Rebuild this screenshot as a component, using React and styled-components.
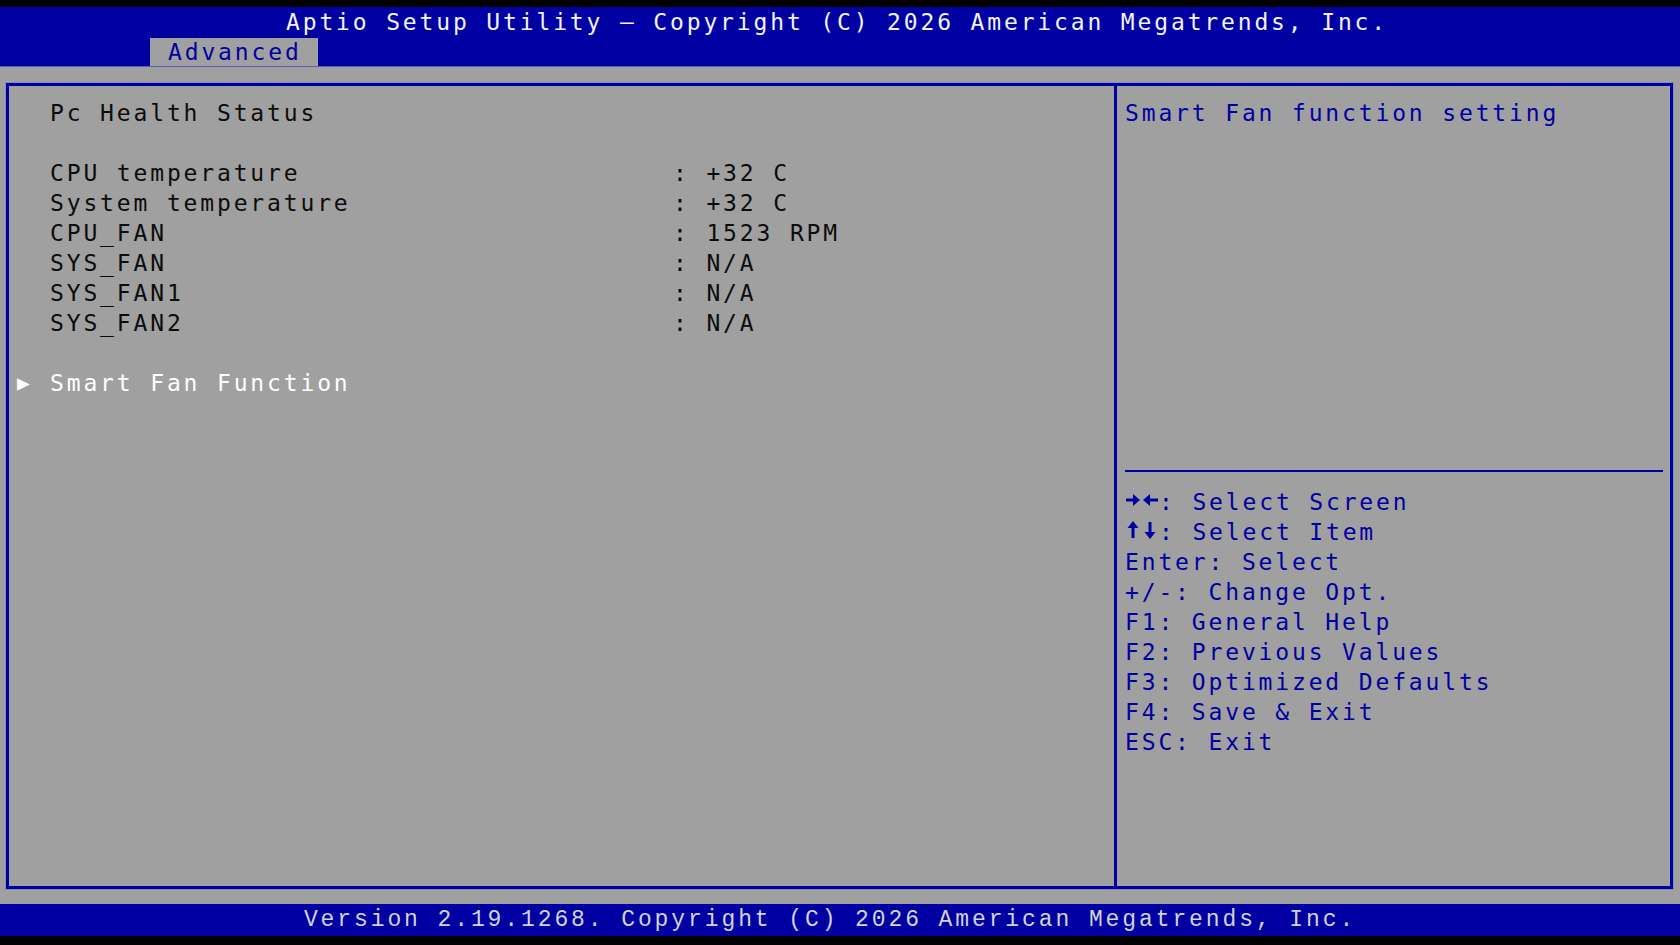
import React from 'react'
import styled, { createGlobalStyle } from 'styled-components'

const BLUE = '#0000a2'
const GRAY = '#a0a0a0'

const GlobalStyle = createGlobalStyle`
  html, body {
    margin: 0;
    padding: 0;
    background: #000;
  }
  body {
    font-family: 'DejaVu Sans Mono', 'Liberation Mono', monospace;
  }
`

const readings = [
  { label: 'CPU temperature', value: '+32 C' },
  { label: 'System temperature', value: '+32 C' },
  { label: 'CPU_FAN', value: '1523 RPM' },
  { label: 'SYS_FAN', value: 'N/A' },
  { label: 'SYS_FAN1', value: 'N/A' },
  { label: 'SYS_FAN2', value: 'N/A' },
]

// two-cell arrow glyphs, drawn like the heavy BIOS font ones
const HorizontalArrows = () => (
  <ArrowIcon viewBox="0 0 34 30" aria-label="→←">
    <rect x="1" y="13.5" width="9" height="3" />
    <polygon points="8,9 15,15 8,21" />
    <polygon points="18,15 25,9 25,21" />
    <rect x="24" y="13.5" width="9" height="3" />
  </ArrowIcon>
)

const VerticalArrows = () => (
  <ArrowIcon viewBox="0 0 34 30" aria-label="↑↓">
    <polygon points="8,6 2.5,13 13.5,13" />
    <rect x="6.5" y="12" width="3" height="11" />
    <rect x="23.5" y="7" width="3" height="11" />
    <polygon points="25,24 19.5,17 30.5,17" />
  </ArrowIcon>
)

const keys = [
  { icon: <HorizontalArrows />, text: ': Select Screen' },
  { icon: <VerticalArrows />, text: ': Select Item' },
  { text: 'Enter: Select' },
  { text: '+/-: Change Opt.' },
  { text: 'F1: General Help' },
  { text: 'F2: Previous Values' },
  { text: 'F3: Optimized Defaults' },
  { text: 'F4: Save & Exit' },
  { text: 'ESC: Exit' },
]

const App = () => {
  return (
    <>
      <GlobalStyle />
      <Screen>
        <Header>
          <Title>Aptio Setup Utility – Copyright (C) 2026 American Megatrends, Inc.</Title>
          <TabRow>
            <Tab>Advanced</Tab>
          </TabRow>
        </Header>

        <Main>
          <Panel>
            <Settings>
              <Row>
                <Marker />
                <Label>Pc Health Status</Label>
              </Row>
              <Row />
              {readings.map((r) => (
                <Row key={r.label}>
                  <Marker />
                  <Label>{r.label}</Label>
                  <Value>: {r.value}</Value>
                </Row>
              ))}
              <Row />
              <Row>
                <Marker>▶</Marker>
                <Label $selected>Smart Fan Function</Label>
              </Row>
            </Settings>

            <Help>
              <HelpText>Smart Fan function setting</HelpText>
              <Separator />
              <KeyList>
                {keys.map((k) => (
                  <KeyLine key={k.text}>
                    {k.icon}
                    {k.text}
                  </KeyLine>
                ))}
              </KeyList>
            </Help>
          </Panel>
        </Main>

        <Footer>
          <FooterText>Version 2.19.1268. Copyright (C) 2026 American Megatrends, Inc.</FooterText>
        </Footer>
      </Screen>
    </>
  )
}

const Screen = styled.div`
  width: 1680px;
  height: 945px;
  display: flex;
  flex-direction: column;
  background: #000;
  padding-top: 7px;
  padding-bottom: 9px;
  box-sizing: border-box;
  font-size: 23px;
  letter-spacing: 2.85px;
`

const Header = styled.header`
  height: 59px;
  background: ${BLUE};
  display: flex;
  flex-direction: column;
`

const Title = styled.div`
  height: 31px;
  line-height: 31px;
  text-align: center;
  color: #f2f2f2;
  white-space: pre;
  padding-right: 6px;
`

const TabRow = styled.div`
  display: flex;
  padding-left: 150px;
`

const Tab = styled.div`
  width: 168px;
  height: 28px;
  box-sizing: border-box;
  padding-left: 18px;
  line-height: 29px;
  background: ${GRAY};
  color: ${BLUE};
`

const Main = styled.main`
  flex: 1;
  background: ${GRAY};
  padding: 16px 7px 15px 6px;
  display: flex;
  border-top: 1px solid #5c5cb4;
`

const Panel = styled.div`
  flex: 1;
  display: flex;
  border: 3px solid ${BLUE};
  box-shadow: 0 0 0 1px #8a8ab8;
`

const Settings = styled.section`
  width: 1108px;
  box-sizing: border-box;
  border-right: 3px solid ${BLUE};
  padding: 12px 0 0 7px;
`

const Row = styled.div`
  display: grid;
  grid-template-columns: 34px 623px 1fr;
  height: 30px;
  line-height: 30px;
  white-space: pre;
`

const Marker = styled.span`
  color: #fff;
  font-size: 21px;
  letter-spacing: 0;
  padding-left: 1px;
`

const Label = styled.span`
  color: ${(p) => (p.$selected ? '#ffffff' : '#0c0c0c')};
`

const Value = styled.span`
  color: #0c0c0c;
`

const Help = styled.aside`
  flex: 1;
  display: flex;
  flex-direction: column;
  padding: 12px 7px 0 8px;
`

const HelpText = styled.div`
  height: 372px;
  line-height: 30px;
  color: ${BLUE};
`

const Separator = styled.hr`
  margin: 0;
  border: 0;
  height: 2px;
  background: ${BLUE};
`

const KeyList = styled.div`
  margin-top: 15px;
  display: flex;
  flex-direction: column;
`

const KeyLine = styled.div`
  display: flex;
  align-items: center;
  height: 30px;
  line-height: 30px;
  color: ${BLUE};
  white-space: pre;
`

const ArrowIcon = styled.svg`
  width: 34px;
  height: 30px;
  flex: none;
  fill: ${BLUE};
  margin-top: -4px;
`

const Footer = styled.footer`
  height: 32px;
  background: ${BLUE};
  display: flex;
  justify-content: center;
  align-items: center;
`

const FooterText = styled.div`
  color: #d2d2d2;
  font-family: 'Liberation Mono', monospace;
  font-size: 23px;
  letter-spacing: 2.9px;
  padding-right: 20px;
  white-space: pre;
`

export default App
